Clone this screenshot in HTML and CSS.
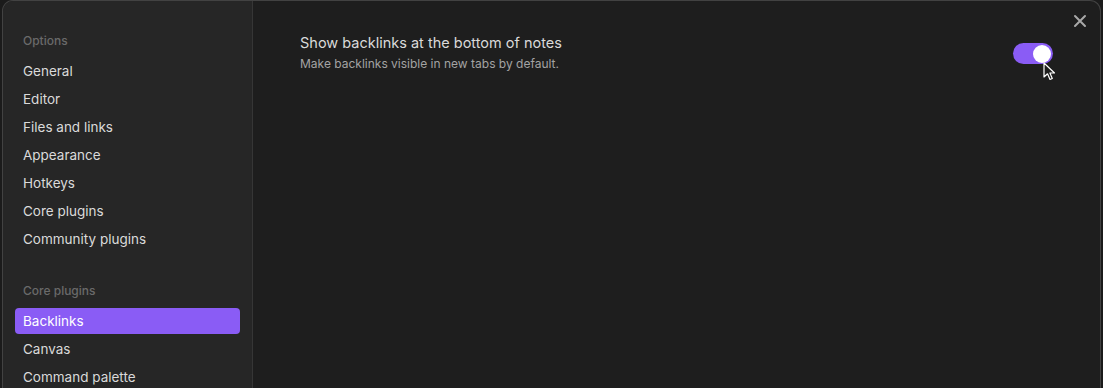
FILE: index.html
```html
<!DOCTYPE html>
<html>
<head>
<meta charset="utf-8">
<link rel="stylesheet" href="styles.css">
</head>
<body>
<div class="modal">
  <nav class="sidebar">
    <div class="group">
      <div class="group-title">Options</div>
      <div class="item">General</div>
      <div class="item">Editor</div>
      <div class="item">Files and links</div>
      <div class="item">Appearance</div>
      <div class="item">Hotkeys</div>
      <div class="item">Core plugins</div>
      <div class="item">Community plugins</div>
    </div>
    <div class="group">
      <div class="group-title">Core plugins</div>
      <div class="item active">Backlinks</div>
      <div class="item">Canvas</div>
      <div class="item">Command palette</div>
    </div>
  </nav>
  <main class="content">
    <div class="setting">
      <div class="setting-info">
        <div class="setting-name">Show backlinks at the bottom of notes</div>
        <div class="setting-desc">Make backlinks visible in new tabs by default.</div>
      </div>
      <div class="toggle"><div class="knob"></div></div>
    </div>
  </main>
  <button class="close" aria-label="Close">
    <svg width="14" height="14" viewBox="0 0 14 14"><path d="M2 2L12 12M12 2L2 12" stroke="#a8a8a8" stroke-width="2" stroke-linecap="round"/></svg>
  </button>
  <svg class="cursor" width="14" height="20" viewBox="0 0 14 20">
    <path d="M1 1 L1 15 L4.5 11.8 L7 17.5 L9.3 16.5 L6.9 11 L11.5 11 Z" fill="#1e1e1e" stroke="#ffffff" stroke-width="1.2" stroke-linejoin="round"/>
  </svg>
</div>
</body>
</html>
```
FILE: styles.css
```css
* { box-sizing: border-box; }
html, body { margin: 0; padding: 0; }
body {
  background: #1b1b1b;
  font-family: Inter, "Noto Sans", sans-serif;
  width: 1103px;
  height: 388px;
  overflow: hidden;
}
.modal {
  position: relative;
  margin-left: 2px;
  width: 1099px;
  height: 388px;
  border: 1px solid #424242;
  border-bottom: none;
  border-radius: 11px 11px 0 0;
  display: flex;
  overflow: hidden;
  background: #1e1e1e;
}
.sidebar {
  width: 250px;
  flex: none;
  background: #262626;
  border-right: 1px solid #363636;
  padding: 25px 12px 0 12px;
  display: flex;
  flex-direction: column;
  gap: 24px;
}
.group {
  display: flex;
  flex-direction: column;
  gap: 2px;
}
.group-title {
  height: 30px;
  line-height: 30px;
  padding: 0 8px;
  font-size: 12px;
  font-weight: 500;
  color: #6a6a6a;
}
.item {
  flex: none;
  height: 26px;
  line-height: 26px;
  padding: 0 8px;
  font-size: 13.5px;
  color: #dadada;
  border-radius: 4px;
  white-space: nowrap;
}
.item.active {
  background: #8a5cf5;
  color: #ffffff;
}
.content {
  flex: 1;
  padding: 32px 47px 0 47px;
}
.setting {
  display: flex;
  align-items: center;
  justify-content: space-between;
}
.setting-name {
  font-size: 14.5px;
  line-height: 20px;
  color: #dadada;
}
.setting-desc {
  margin-top: 2px;
  font-size: 12px;
  line-height: 18px;
  color: #a3a3a3;
}
.toggle {
  width: 40px;
  height: 21px;
  border-radius: 11px;
  background: #8a5cf5;
  position: relative;
  margin-top: 1px;
}
.knob {
  position: absolute;
  right: 2px;
  top: 1.5px;
  width: 18px;
  height: 18px;
  border-radius: 50%;
  background: #ffffff;
}
.close {
  position: absolute;
  top: 11px;
  right: 11px;
  width: 18px;
  height: 18px;
  padding: 0;
  border: none;
  background: transparent;
  display: flex;
  align-items: center;
  justify-content: center;
}
.cursor {
  position: absolute;
  left: 1040px;
  top: 61px;
}
```
